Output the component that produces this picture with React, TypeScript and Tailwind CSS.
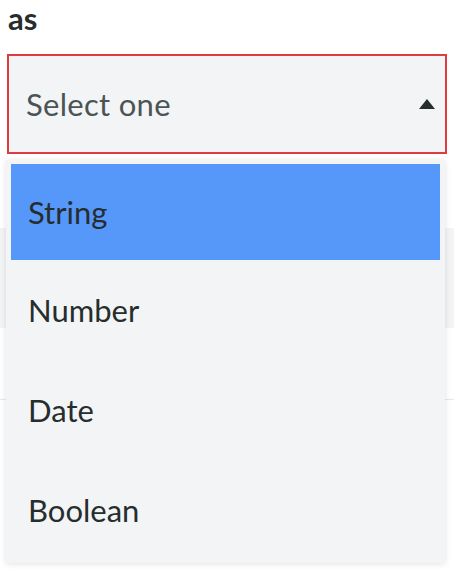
import React from 'react';

const options = ['String', 'Number', 'Date', 'Boolean'];

const App: React.FC = () => {
  return (
    <div className="relative min-h-screen bg-white font-['Lato','Liberation_Sans',sans-serif] text-[#262d2d]">
      <div>
        <h3 className="px-[8px] text-[31px] leading-[36px] font-bold">as</h3>

        <div className="mx-[7px] mt-[18px] h-[100px] border-2 border-[#e03c40] bg-[#f3f4f6] flex items-center justify-between pl-[17px] pr-[10px]">
          <span className="text-[31px] tracking-[0.3px] text-[#4b5454]">Select one</span>
          <svg width="16" height="10" viewBox="0 0 16 10">
            <path d="M8 0 L16 10 L0 10 Z" fill="#262d2d" />
          </svg>
        </div>

        {/* content behind the open menu */}
        <div className="mt-[74px] h-[100px] bg-[#f3f4f5]"></div>
        <div className="mt-[71px] h-px bg-[#e8e9ea]"></div>
      </div>

      <div className="absolute left-[6px] top-[160px] w-[439px] bg-[#f3f4f6] px-[5px] pt-[4px] pb-[3px] shadow-[0_1px_6px_rgba(0,0,0,0.12)]">
        {options.map((opt, i) => (
          <div
            key={opt}
            className={`flex items-center pl-[17px] text-[31px] ${
              i === 0 ? 'h-[96px] bg-[#5697fa]' : 'h-[100px]'
            }`}
          >
            {opt}
          </div>
        ))}
      </div>
    </div>
  );
};

export default App;
